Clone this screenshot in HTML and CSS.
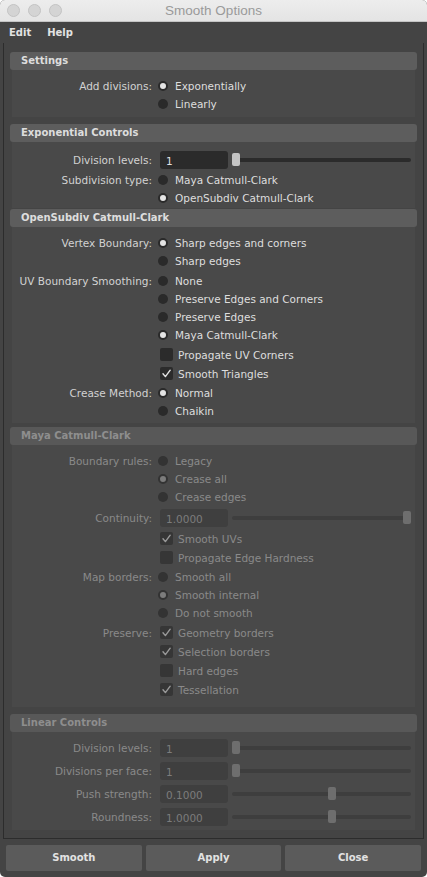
FILE: index.html
```html
<!DOCTYPE html>
<html>
<head>
<meta charset="utf-8">
<link rel="stylesheet" href="styles.css">
</head>
<body>
<div class="window">
  <div class="titlebar">
    <div class="lights"><span class="light"></span><span class="light"></span><span class="light"></span></div>
    <div class="title">Smooth Options</div>
  </div>
  <div class="menubar"><span class="menu">Edit</span><span class="menu">Help</span></div>

  <div class="frame">
    <section class="section sec-settings">
      <div class="hdr">Settings</div>
      <div class="body">
        <div class="row"><div class="lbl">Add divisions:</div><div class="ctl"><span class="radio on"></span><span class="opt">Exponentially</span></div></div>
        <div class="row"><div class="lbl"></div><div class="ctl"><span class="radio"></span><span class="opt">Linearly</span></div></div>
      </div>
    </section>

    <section class="section sec-exp">
      <div class="hdr">Exponential Controls</div>
      <div class="body">
        <div class="row frow"><div class="lbl">Division levels:</div><div class="ctl"><span class="field">1</span><span class="slider" style="--v:0"><span class="handle"></span></span></div></div>
        <div class="row"><div class="lbl">Subdivision type:</div><div class="ctl"><span class="radio"></span><span class="opt">Maya Catmull-Clark</span></div></div>
        <div class="row"><div class="lbl"></div><div class="ctl"><span class="radio on"></span><span class="opt">OpenSubdiv Catmull-Clark</span></div></div>
      </div>
    </section>

    <section class="section sec-osd">
      <div class="hdr">OpenSubdiv Catmull-Clark</div>
      <div class="body">
        <div class="row"><div class="lbl">Vertex Boundary:</div><div class="ctl"><span class="radio on"></span><span class="opt">Sharp edges and corners</span></div></div>
        <div class="row"><div class="lbl"></div><div class="ctl"><span class="radio"></span><span class="opt">Sharp edges</span></div></div>
        <div class="row gap2"><div class="lbl">UV Boundary Smoothing:</div><div class="ctl"><span class="radio"></span><span class="opt">None</span></div></div>
        <div class="row"><div class="lbl"></div><div class="ctl"><span class="radio"></span><span class="opt">Preserve Edges and Corners</span></div></div>
        <div class="row"><div class="lbl"></div><div class="ctl"><span class="radio"></span><span class="opt">Preserve Edges</span></div></div>
        <div class="row"><div class="lbl"></div><div class="ctl"><span class="radio on"></span><span class="opt">Maya Catmull-Clark</span></div></div>
        <div class="row crow gap1"><div class="lbl"></div><div class="ctl"><span class="check"></span><span class="copt">Propagate UV Corners</span></div></div>
        <div class="row crow"><div class="lbl"></div><div class="ctl"><span class="check on"><svg viewBox="0 0 13 13"><polyline points="3,6.8 5.4,9.6 10.2,3.2"/></svg></span><span class="copt">Smooth Triangles</span></div></div>
        <div class="row gap1"><div class="lbl">Crease Method:</div><div class="ctl"><span class="radio on"></span><span class="opt">Normal</span></div></div>
        <div class="row"><div class="lbl"></div><div class="ctl"><span class="radio"></span><span class="opt">Chaikin</span></div></div>
      </div>
    </section>

    <section class="section sec-maya dim">
      <div class="hdr">Maya Catmull-Clark</div>
      <div class="body">
        <div class="row"><div class="lbl">Boundary rules:</div><div class="ctl"><span class="radio"></span><span class="opt">Legacy</span></div></div>
        <div class="row"><div class="lbl"></div><div class="ctl"><span class="radio on"></span><span class="opt">Crease all</span></div></div>
        <div class="row"><div class="lbl"></div><div class="ctl"><span class="radio"></span><span class="opt">Crease edges</span></div></div>
        <div class="row frow gap1"><div class="lbl">Continuity:</div><div class="ctl"><span class="field">1.0000</span><span class="slider" style="--v:1"><span class="handle"></span></span></div></div>
        <div class="row crow"><div class="lbl"></div><div class="ctl"><span class="check on"><svg viewBox="0 0 13 13"><polyline points="3,6.8 5.4,9.6 10.2,3.2"/></svg></span><span class="copt">Smooth UVs</span></div></div>
        <div class="row crow"><div class="lbl"></div><div class="ctl"><span class="check"></span><span class="copt">Propagate Edge Hardness</span></div></div>
        <div class="row gap1"><div class="lbl">Map borders:</div><div class="ctl"><span class="radio"></span><span class="opt">Smooth all</span></div></div>
        <div class="row"><div class="lbl"></div><div class="ctl"><span class="radio on"></span><span class="opt">Smooth internal</span></div></div>
        <div class="row"><div class="lbl"></div><div class="ctl"><span class="radio"></span><span class="opt">Do not smooth</span></div></div>
        <div class="row crow gap1"><div class="lbl">Preserve:</div><div class="ctl"><span class="check on"><svg viewBox="0 0 13 13"><polyline points="3,6.8 5.4,9.6 10.2,3.2"/></svg></span><span class="copt">Geometry borders</span></div></div>
        <div class="row crow"><div class="lbl"></div><div class="ctl"><span class="check on"><svg viewBox="0 0 13 13"><polyline points="3,6.8 5.4,9.6 10.2,3.2"/></svg></span><span class="copt">Selection borders</span></div></div>
        <div class="row crow"><div class="lbl"></div><div class="ctl"><span class="check"></span><span class="copt">Hard edges</span></div></div>
        <div class="row crow"><div class="lbl"></div><div class="ctl"><span class="check on"><svg viewBox="0 0 13 13"><polyline points="3,6.8 5.4,9.6 10.2,3.2"/></svg></span><span class="copt">Tessellation</span></div></div>
      </div>
    </section>

    <section class="section sec-lin dim">
      <div class="hdr">Linear Controls</div>
      <div class="body">
        <div class="row lrow"><div class="lbl">Division levels:</div><div class="ctl"><span class="field">1</span><span class="slider" style="--v:0"><span class="handle"></span></span></div></div>
        <div class="row lrow"><div class="lbl">Divisions per face:</div><div class="ctl"><span class="field">1</span><span class="slider" style="--v:0"><span class="handle"></span></span></div></div>
        <div class="row lrow"><div class="lbl">Push strength:</div><div class="ctl"><span class="field">0.1000</span><span class="slider" style="--v:0.56"><span class="handle"></span></span></div></div>
        <div class="row lrow"><div class="lbl">Roundness:</div><div class="ctl"><span class="field">1.0000</span><span class="slider" style="--v:0.56"><span class="handle"></span></span></div></div>
      </div>
    </section>
  </div>

  <div class="buttons">
    <div class="btn">Smooth</div>
    <div class="btn">Apply</div>
    <div class="btn">Close</div>
  </div>
</div>
</body>
</html>
```

FILE: styles.css
```css
html, body {
  margin: 0;
  padding: 0;
  background: #ffffff;
}
body {
  width: 427px;
  height: 877px;
  overflow: hidden;
  font-family: "DejaVu Sans", "Open Sans", sans-serif;
  font-size: 10.5px;
}
.window {
  width: 427px;
  height: 877px;
  background: #444444;
  border-radius: 5px;
  overflow: hidden;
  display: flex;
  flex-direction: column;
}
.titlebar {
  height: 21px;
  border-bottom: 1px solid #c4c4c4;
  background: linear-gradient(#ededed, #e4e4e4);
  display: flex;
  align-items: center;
  position: relative;
}
.lights {
  display: flex;
  gap: 8px;
  padding-left: 7px;
}
.light {
  width: 11px;
  height: 11px;
  border-radius: 50%;
  background: #d4d4d4;
  border: 0.5px solid #c3c3c3;
}
.title {
  position: absolute;
  left: 0;
  right: 0;
  top: 0;
  line-height: 22px;
  text-align: center;
  font-family: "Liberation Sans", Arial, sans-serif;
  font-size: 13.5px;
  color: #9a9a9a;
}
.menubar {
  height: 21px;
  display: flex;
  align-items: center;
  gap: 16px;
  padding-left: 9px;
  color: #e2e2e2;
  font-weight: bold;
  font-size: 10px;
}
.frame {
  margin: 0 3px;
  border: 1px solid #2c2c2c;
  border-top: none;
  padding: 9px 6px 8px;
  height: 796px;
  box-sizing: border-box;
  flex: none;
}
.section {
  display: flex;
  flex-direction: column;
}
.hdr {
  height: 18px;
  line-height: 18px;
  background: #5d5d5d;
  border-radius: 3px;
  padding-left: 11px;
  font-weight: bold;
  font-size: 10px;
  color: #dddddd;
}
.body {
  margin: 0 2px;
  background: #494949;
  padding-top: 7px;
}
.sec-settings { margin-bottom: 7px; }
.sec-settings .body { padding-bottom: 4px; }
.sec-exp { margin-bottom: 1px; }
.sec-exp .body { padding-bottom: 1px; }
.sec-osd { margin-bottom: 4px; }
.sec-osd .body { padding-bottom: 3px; }
.sec-maya { margin-bottom: 7px; }
.sec-maya .body { padding-bottom: 8px; }
.sec-lin .body { padding-top: 4px; padding-bottom: 2px; }

.row {
  display: grid;
  grid-template-columns: 140px 1fr;
  height: 18px;
  align-items: center;
}
.row.crow { height: 19px; }
.row.frow { height: 22px; }
.row.lrow { height: 23px; }
.row.gap1 { margin-top: 1px; }
.row.gap2 { margin-top: 2px; }
.lbl {
  text-align: right;
  color: #d2d2d2;
  white-space: nowrap;
}
.ctl {
  display: flex;
  align-items: center;
  white-space: nowrap;
}
.radio {
  width: 10px;
  height: 10px;
  box-sizing: border-box;
  border-radius: 50%;
  background: #2a2a2a;
  margin-left: 6px;
  flex: none;
}
.radio.on {
  background: #e4e4e4;
  border: 2px solid #2a2a2a;
}
.opt {
  margin-left: 7px;
  color: #dedede;
}
.check {
  width: 13px;
  height: 13px;
  border-radius: 2px;
  background: #2b2b2b;
  margin-left: 8px;
  flex: none;
  display: flex;
}
.check svg {
  width: 13px;
  height: 13px;
}
.check polyline {
  fill: none;
  stroke: #e4e4e4;
  stroke-width: 1.4;
  stroke-linecap: round;
  stroke-linejoin: round;
}
.copt {
  margin-left: 5px;
  color: #dedede;
}
.field {
  width: 68px;
  height: 18px;
  box-sizing: border-box;
  margin-left: 8px;
  background: #2b2b2b;
  border-radius: 3px;
  padding-left: 6px;
  line-height: 20px;
  color: #e2e2e2;
  flex: none;
}
.slider {
  position: relative;
  width: 179px;
  height: 4px;
  margin-left: 4px;
  border-radius: 2px;
  background: #2b2b2b;
  flex: none;
}
.handle {
  position: absolute;
  top: -5px;
  left: calc(var(--v) * (100% - 8px));
  width: 8px;
  height: 13px;
  border-radius: 2px;
  background: #c4c4c4;
}

.dim .hdr { background: #585858; color: #8e8e8e; }
.dim .lbl, .dim .opt, .dim .copt { color: #8a8a8a; }
.dim .radio { background: #333333; }
.dim .radio.on { background: #7c7c7c; border-color: #333333; }
.dim .check { background: #363636; }
.dim .check polyline { stroke: #9a9a9a; }
.dim .field { background: #3f3f3f; color: #7c7c7c; }
.dim .slider { background: #3e3e3e; }
.dim .handle { background: #6e6e6e; }

.buttons {
  display: flex;
  gap: 4px;
  padding: 6px 6px 0;
}
.btn {
  flex: 1;
  height: 26px;
  line-height: 26px;
  background: #5b5b5b;
  border-radius: 2px;
  text-align: center;
  font-weight: bold;
  font-size: 10px;
  color: #e2e2e2;
}
```
